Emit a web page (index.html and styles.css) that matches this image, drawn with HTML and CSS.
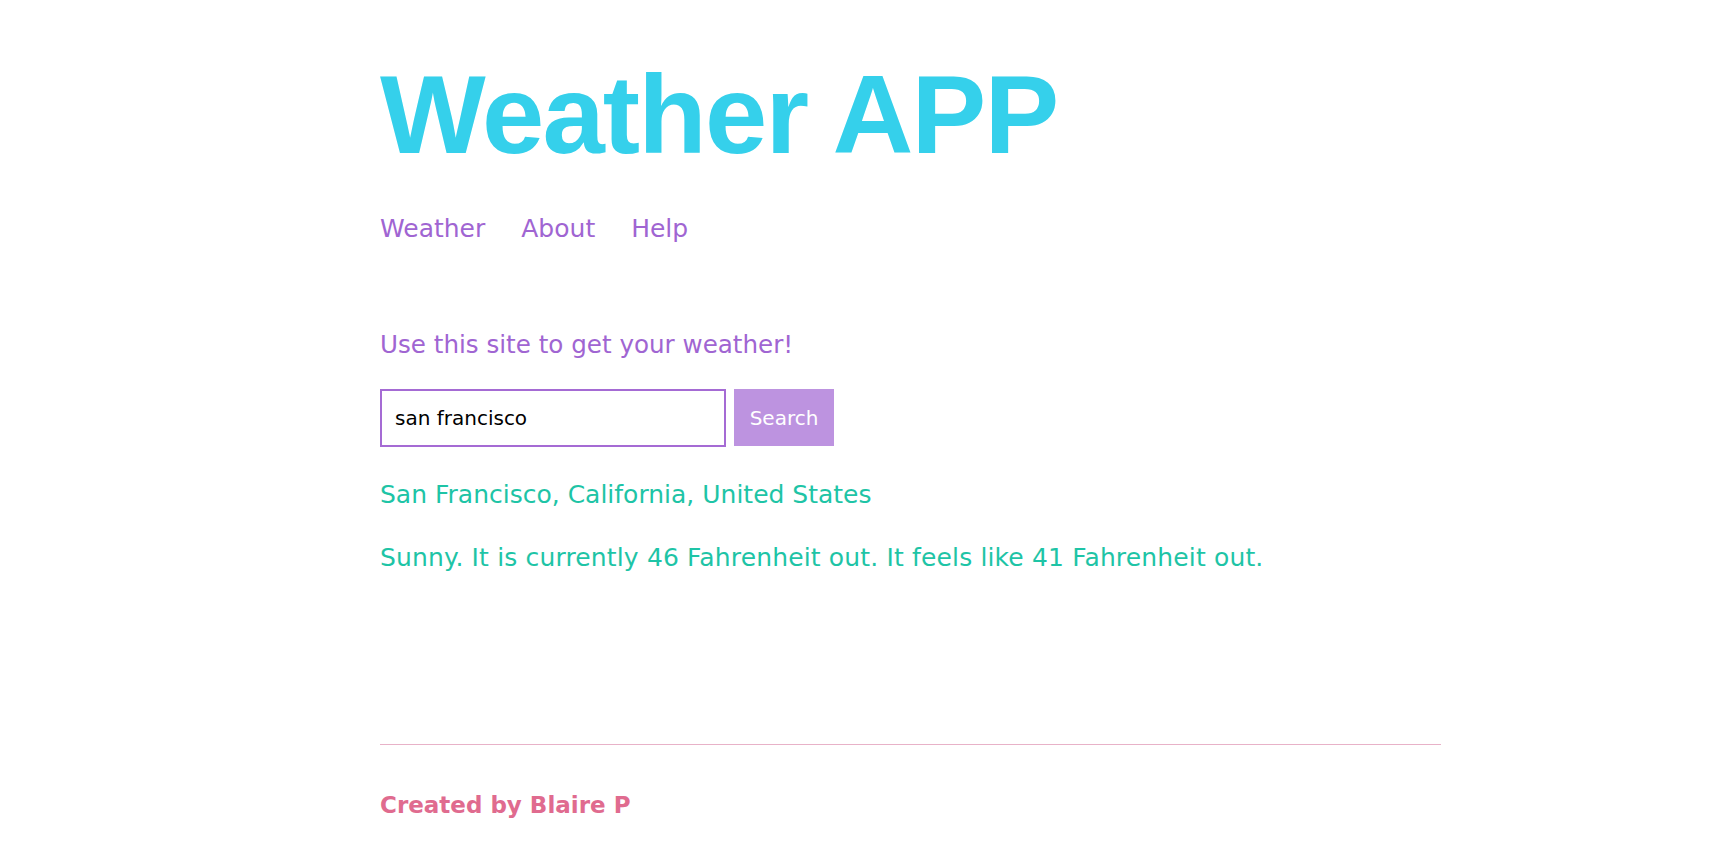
FILE: index.html
```html
<!DOCTYPE html>
<html>
<head>
<meta charset="utf-8">
<title>Weather APP</title>
<link rel="stylesheet" href="styles.css">
</head>
<body>
<div class="page">
  <header class="header">
    <h1 class="title">Weather APP</h1>
    <nav class="nav">
      <a href="#" class="nav-link">Weather</a>
      <a href="#" class="nav-link">About</a>
      <a href="#" class="nav-link">Help</a>
    </nav>
  </header>
  <main class="main">
    <p class="intro">Use this site to get your weather!</p>
    <form class="search">
      <input class="search-input" type="text" value="san francisco">
      <button class="search-button" type="button">Search</button>
    </form>
    <p class="result location">San Francisco, California, United States</p>
    <p class="result forecast">Sunny. It is currently 46 Fahrenheit out. It feels like 41 Fahrenheit out.</p>
  </main>
  <footer class="footer">
    <p class="credit">Created by Blaire P</p>
  </footer>
</div>
</body>
</html>
```

FILE: styles.css
```css
html, body {
  margin: 0;
  padding: 0;
  background: #ffffff;
}

body {
  font-family: "Comic Sans MS", "DejaVu Sans", sans-serif;
}

.page {
  width: 1061px;
  padding-left: 380px;
  display: flex;
  flex-direction: column;
}

.header {
  padding-top: 59px;
}

.title {
  margin: 0;
  font-family: "Liberation Sans", Arial, sans-serif;
  font-weight: 700;
  font-size: 112px;
  line-height: 112px;
  letter-spacing: -1.8px;
  color: #35d0eb;
}

.nav {
  margin-top: 43px;
  display: flex;
  gap: 36px;
  font-size: 25px;
  line-height: 30px;
}

.nav-link {
  color: #a065d2;
  text-decoration: none;
}

.main {
  height: 500px;
}

.intro {
  margin: 86px 0 0;
  font-size: 24.6px;
  line-height: 30px;
  color: #a065d2;
}

.search {
  margin-top: 29px;
  display: flex;
  gap: 8px;
}

.search-input {
  box-sizing: border-box;
  width: 346px;
  height: 58px;
  margin: 0;
  padding: 0 13px;
  border: 2px solid #a56bd4;
  font-family: "Comic Sans MS", "DejaVu Sans", sans-serif;
  font-size: 20px;
  color: #000000;
  outline: none;
}

.search-button {
  box-sizing: border-box;
  width: 100px;
  height: 57px;
  margin: 0;
  padding: 0;
  border: none;
  background: #bd93e0;
  color: #ffffff;
  font-family: "Comic Sans MS", "DejaVu Sans", sans-serif;
  font-size: 20px;
}

.result {
  margin: 33px 0 0;
  font-size: 25px;
  line-height: 30px;
  color: #1ec4a6;
}

.forecast {
  margin-top: 33px;
  letter-spacing: 0.15px;
}

.footer {
  border-top: 1px solid #e8b2c8;
}

.credit {
  margin: 45px 0 0;
  font-size: 23px;
  line-height: 30px;
  font-weight: 700;
  color: #e06b8f;
}
```
